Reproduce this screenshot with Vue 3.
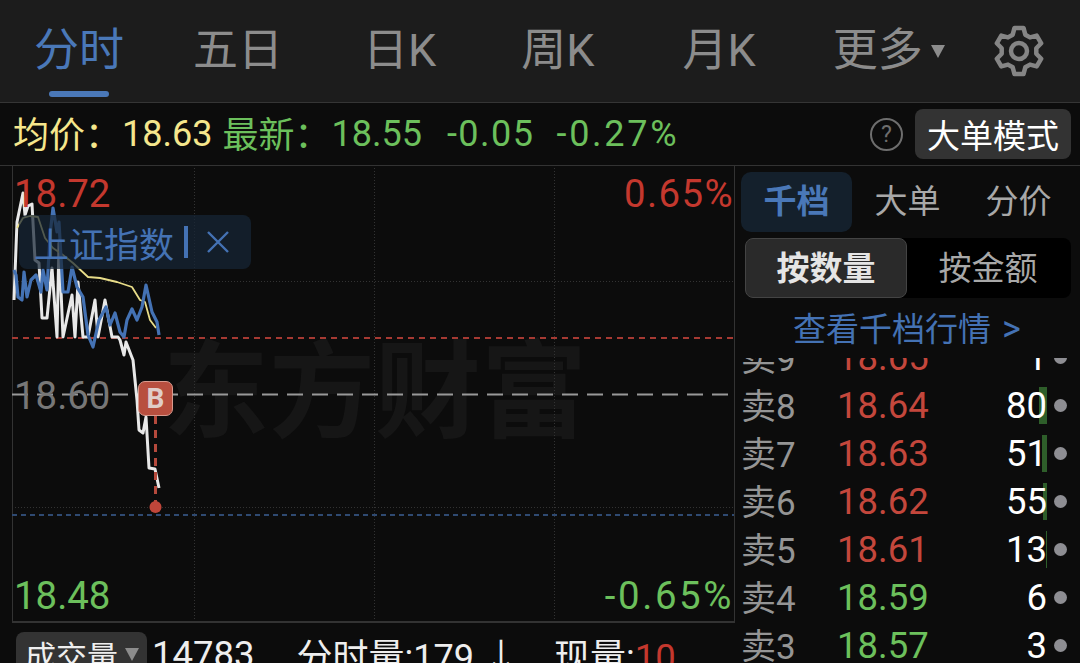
<script setup>
// 盘口数据
const rows = [
  { label: '卖', no: 9, price: '18.65', up: true, qty: 1, bar: 0 },
  { label: '卖', no: 8, price: '18.64', up: true, qty: 80, bar: 8 },
  { label: '卖', no: 7, price: '18.63', up: true, qty: 51, bar: 5 },
  { label: '卖', no: 6, price: '18.62', up: true, qty: 55, bar: 4 },
  { label: '卖', no: 5, price: '18.61', up: true, qty: 13, bar: 1 },
  { label: '卖', no: 4, price: '18.59', up: false, qty: 6, bar: 0 },
  { label: '卖', no: 3, price: '18.57', up: false, qty: 3, bar: 0 }
]

const whiteLine = '14,300 17,222 23,193 25,215 28,206 32,204 35,260 39,263 42,318 47,318 52,268 57,337 59,243 63,337 72,295 75,337 78,282 83,337 88,337 95,300 98,337 105,300 112,337 118,337 120,340 124,355 126,342 131,355 133,360 137,400 139,430 143,433 146,417 149,468 155,469 159,488'
const blueLine = '14,270 16,275 18,297 22,300 24,272 27,297 31,280 36,275 41,292 43,270 47,290 50,235 53,208 57,232 59,222 63,292 68,292 72,267 77,287 83,297 88,335 93,347 99,320 106,307 110,325 115,313 120,332 124,337 127,320 132,309 137,320 142,307 146,285 152,312 157,322 159,335'
const yellowLine = '17,228 23,218 30,216 38,217 45,238 53,248 63,255 73,263 88,277 100,278 117,282 132,287 140,300 145,302 150,320 156,328'

// 六齿齿轮
const gearPoints = (() => {
  const pts = []
  for (let i = 0; i < 6; i++) {
    const a = i * 60 - 90
    const add = (deg, r) => {
      const t = ((a + deg) * Math.PI) / 180
      pts.push((r * Math.cos(t)).toFixed(1) + ',' + (r * Math.sin(t)).toFixed(1))
    }
    add(-21, 17.5)
    add(-11, 23.5)
    add(11, 23.5)
    add(21, 17.5)
  }
  return pts.join(' ')
})()
</script>

<template>
  <div class="page">
    <header class="tabs">
      <span class="tab active">分时</span>
      <span class="tab">五日</span>
      <span class="tab">日K</span>
      <span class="tab">周K</span>
      <span class="tab">月K</span>
      <span class="tab">更多<i class="caret"></i></span>
      <svg class="gear" width="56" height="56" viewBox="-28 -28 56 56">
        <polygon :points="gearPoints" fill="none" stroke="#858585" stroke-width="4.5" stroke-linejoin="round" />
        <circle r="8" fill="none" stroke="#858585" stroke-width="4.5" />
      </svg>
    </header>

    <section class="stats">
      <span class="yellow cjk">均价：</span>
      <span class="yellow s-avg">18.63</span>
      <span class="green cjk s-new">最新：</span>
      <span class="green s-price">18.55</span>
      <span class="green s-diff">-0.05</span>
      <span class="green s-pct">-0.27%</span>
      <span class="help">?</span>
      <button class="mode">大单模式</button>
    </section>

    <main class="body">
      <div class="left">
        <div class="chart">
          <div class="watermark">东方财富</div>
          <svg class="plot" width="735" height="458" viewBox="0 165 735 458">
            <g stroke="#333" stroke-width="1" stroke-dasharray="1 2" fill="none">
              <path d="M194.5 165V622M374.5 165V622M554.5 165V622" />
              <path d="M12 281.5H734M12 507.5H734" />
            </g>
            <path d="M12 338H734" stroke="#a63a33" stroke-width="2" stroke-dasharray="6 5" />
            <path d="M12 394.5H734" stroke="#999" stroke-width="2" stroke-dasharray="16 9" />
            <path d="M12 515H734" stroke="#2f4a72" stroke-width="2" stroke-dasharray="5 4" />
            <polyline :points="whiteLine" fill="none" stroke="#e8e8e8" stroke-width="3" stroke-linejoin="round" />
            <polyline :points="yellowLine" fill="none" stroke="#e8dc88" stroke-width="1.8" stroke-linejoin="round" />
            <polyline :points="blueLine" fill="none" stroke="#4472b4" stroke-width="3.2" stroke-linejoin="round" />
            <path d="M155.5 416V507" stroke="#b5493c" stroke-width="3" stroke-dasharray="8 6" />
            <circle cx="155.5" cy="507" r="6" fill="#c0463a" />
          </svg>

          <span class="val red v-top-l">18.72</span>
          <span class="val red v-top-r">0.65%</span>
          <span class="val grey v-mid">18.60</span>
          <span class="val green v-bot-l">18.48</span>
          <span class="val green v-bot-r">-0.65%</span>

          <div class="overlay">
            <span class="ov-text">上证指数</span>
            <i class="ov-bar"></i>
            <svg width="24" height="24" viewBox="0 0 24 24">
              <path d="M2 2L22 22M22 2L2 22" stroke="#4472b4" stroke-width="2.4" fill="none" />
            </svg>
          </div>

          <div class="b-mark">B</div>
        </div>

        <div class="volume">
          <span class="pill">成交量<i class="pill-caret"></i></span>
          <span class="v-total">14783</span>
          <span class="v-min">分时量:179 ↓</span>
          <span class="v-now">现量:<em>10</em></span>
        </div>
      </div>

      <aside class="side">
        <div class="side-tabs">
          <span class="side-tab active">千档</span>
          <span class="side-tab">大单</span>
          <span class="side-tab">分价</span>
        </div>
        <div class="segment">
          <span class="seg on">按数量</span>
          <span class="seg">按金额</span>
        </div>
        <div class="more">查看千档行情<span class="more-arrow">&gt;</span></div>
        <div class="book">
          <div class="rows">
            <div v-for="r in rows" :key="r.no" class="row">
              <span class="r-label">{{ r.label }}{{ r.no }}</span>
              <span class="r-price" :class="r.up ? 'red-soft' : 'green'">{{ r.price }}</span>
              <span class="r-qty">
                <i class="r-bar" :style="{ width: r.bar + 'px' }"></i>
                <b>{{ r.qty }}</b>
              </span>
              <i class="r-dot"></i>
            </div>
          </div>
        </div>
      </aside>
    </main>
  </div>
</template>

<style scoped>
.page {
  width: 1080px;
  height: 663px;
  overflow: hidden;
  background: #0c0c0c;
  font-family: Roboto, "Noto Sans CJK SC", sans-serif;
  color: #fff;
  display: flex;
  flex-direction: column;
}

.tabs {
  height: 102px;
  flex: none;
  background: #1c1c1c;
  border-bottom: 1px solid #353535;
  display: flex;
  align-items: center;
  padding-left: 34px;
  font-size: 45px;
  font-weight: 400;
  color: #8c8c8c;
}
.tab {
  position: relative;
  line-height: 108px;
  white-space: nowrap;
  display: flex;
  align-items: center;
}
.tab:nth-child(2) { margin-left: 69px; }
.tab:nth-child(3) { margin-left: 80px; }
.tab:nth-child(4) { margin-left: 85px; }
.tab:nth-child(5) { margin-left: 88px; }
.tab:nth-child(6) { margin-left: 77px; }
.tab.active { color: #4a78b8; }
.tab.active::after {
  content: "";
  position: absolute;
  left: 15px;
  right: 15px;
  bottom: 8px;
  height: 6px;
  border-radius: 3px;
  background: #4a78b8;
}
.caret {
  margin-left: 8px;
  width: 0;
  height: 0;
  border-left: 7px solid transparent;
  border-right: 7px solid transparent;
  border-top: 13px solid #8c8c8c;
}
.gear { margin-left: 46px; }

.stats {
  height: 62px;
  flex: none;
  display: flex;
  align-items: center;
  padding: 0 9px 0 13px;
  font-size: 36px;
  font-weight: 400;
  border-bottom: 1px solid #333;
  white-space: nowrap;
}
.cjk {
  font-size: 36px;
  margin-bottom: 4px;
}
.yellow { color: #f5e68c; }
.green { color: #6cc05c; }
.red { color: #c4382e; }
.grey { color: #777; }
.red-soft { color: #c4473c; }
.s-avg { margin-left: 1px; }
.s-new { margin-left: 10px; }
.s-price { margin-left: 1px; }
.s-diff { margin-left: 25px; letter-spacing: 1.5px; }
.s-pct { margin-left: 22px; letter-spacing: 2.7px; }
.help {
  margin-left: auto;
  width: 29px;
  height: 29px;
  border: 2px solid #6e6e6e;
  border-radius: 50%;
  color: #6e6e6e;
  font-size: 23px;
  line-height: 29px;
  text-align: center;
}
.mode {
  margin-left: 12px;
  width: 156px;
  height: 50px;
  border: 0;
  border-radius: 8px;
  background: #333;
  color: #fff;
  font: 400 33px Roboto, "Noto Sans CJK SC", sans-serif;
  padding: 0;
}

.body {
  flex: 1;
  display: flex;
  min-height: 0;
}
.left {
  width: 735px;
  flex: none;
}
.chart {
  position: relative;
  height: 457px;
  margin-left: 12px;
  border-left: 1px solid #333;
  border-bottom: 2px solid #333;
  border-right: 1px solid #333;
  box-sizing: border-box;
}
.plot {
  position: absolute;
  left: -13px;
  top: -1px;
}
.watermark {
  position: absolute;
  left: 150px;
  top: 167px;
  font-size: 106px;
  line-height: 120px;
  font-weight: 700;
  color: #161616;
  white-space: nowrap;
}
.val {
  position: absolute;
  font-size: 38.4px;
  font-weight: 400;
  line-height: 44px;
}
.v-top-l { left: 1px; top: 6px; }
.v-top-r { right: 0; top: 6px; letter-spacing: 1.4px; }
.v-mid { left: 1px; top: 208px; }
.v-bot-l { left: 1px; top: 408px; }
.v-bot-r { right: 0; top: 408px; letter-spacing: 2.6px; }
.overlay {
  position: absolute;
  left: 6px;
  top: 49px;
  width: 232px;
  height: 54px;
  border-radius: 8px;
  background: rgba(22, 38, 54, 0.72);
  display: flex;
  align-items: center;
  padding-left: 15px;
  box-sizing: border-box;
  color: #4472b4;
  font-size: 35px;
  white-space: nowrap;
}
.ov-bar {
  width: 4px;
  height: 32px;
  margin: 0 18px 0 10px;
  background: #4472b4;
}
.b-mark {
  position: absolute;
  left: 125px;
  top: 215px;
  width: 35px;
  height: 35px;
  box-sizing: border-box;
  border: 1px solid #d89a8e;
  border-radius: 7px;
  background: #b84f3f;
  color: #e0cdc9;
  font-size: 28px;
  font-weight: 700;
  line-height: 33px;
  text-align: center;
}

.volume {
  display: flex;
  align-items: center;
  height: 44px;
  margin-top: 9px;
  margin-left: 16px;
  font-size: 36.5px;
  font-weight: 400;
  color: #eee;
  white-space: nowrap;
}
.pill {
  width: 131px;
  height: 44px;
  flex: none;
  background: #333;
  border-radius: 8px 8px 0 0;
  display: flex;
  align-items: center;
  padding-left: 9px;
  box-sizing: border-box;
  font-size: 31px;
  font-weight: 400;
}
.pill-caret {
  margin-left: 7px;
  width: 0;
  height: 0;
  border-left: 7px solid transparent;
  border-right: 7px solid transparent;
  border-top: 13px solid #8c8c8c;
}
.v-total { margin-left: 5px; }
.v-min { margin-left: 42px; font-size: 36px; }
.v-now { margin-left: 35px; font-size: 36px; }
.v-now em { font-style: normal; color: #c4382e; font-size: 36.5px; }

.side {
  flex: 1;
  display: flex;
  flex-direction: column;
  padding-left: 6px;
  min-width: 0;
}
.side-tabs {
  display: flex;
  margin-top: 6px;
  height: 60px;
}
.side-tab {
  width: 111px;
  text-align: center;
  line-height: 60px;
  font-size: 33px;
  color: #a8a8a8;
  border-radius: 10px;
}
.side-tab.active {
  background: #14202c;
  color: #4a78b8;
  font-weight: 700;
}
.segment {
  margin: 6px 9px 0 4px;
  height: 60px;
  border-radius: 8px;
  background: #000;
  display: flex;
  font-size: 33px;
}
.seg {
  width: 162px;
  text-align: center;
  line-height: 60px;
  color: #a8a8a8;
  box-sizing: border-box;
  border-radius: 8px;
  border: 1px solid transparent;
}
.seg.on {
  background: #2a2a2a;
  border-color: #444;
  color: #e5e5e5;
  font-weight: 700;
}
.more {
  height: 60px;
  line-height: 62px;
  padding-left: 52px;
  font-size: 33px;
  color: #4472b4;
  white-space: nowrap;
}
.more-arrow {
  margin-left: 11px;
  font-size: 36px;
}
.book {
  flex: 1;
  overflow: hidden;
  min-height: 0;
}
.rows { margin-top: -25px; }
.row {
  height: 48px;
  display: flex;
  align-items: center;
}
.r-label {
  width: 96px;
  flex: none;
  font-size: 35px;
  font-weight: 400;
  color: #959595;
  margin-bottom: 3px;
}
.r-price {
  width: 90px;
  flex: none;
  font-size: 36.5px;
  font-weight: 400;
}
.r-qty {
  position: relative;
  width: 120px;
  height: 37px;
  flex: none;
  font-size: 36.5px;
  font-weight: 400;
  text-align: right;
  line-height: 37px;
}
.r-qty b { position: relative; font-weight: 400; }
.r-bar {
  position: absolute;
  right: 0;
  top: 0;
  bottom: 0;
  background: #2e5e2a;
}
.r-dot {
  margin-left: 7px;
  width: 13px;
  height: 13px;
  border-radius: 50%;
  background: #8e8e93;
}
</style>

<style>
html, body { background: #0c0c0c; }
</style>
